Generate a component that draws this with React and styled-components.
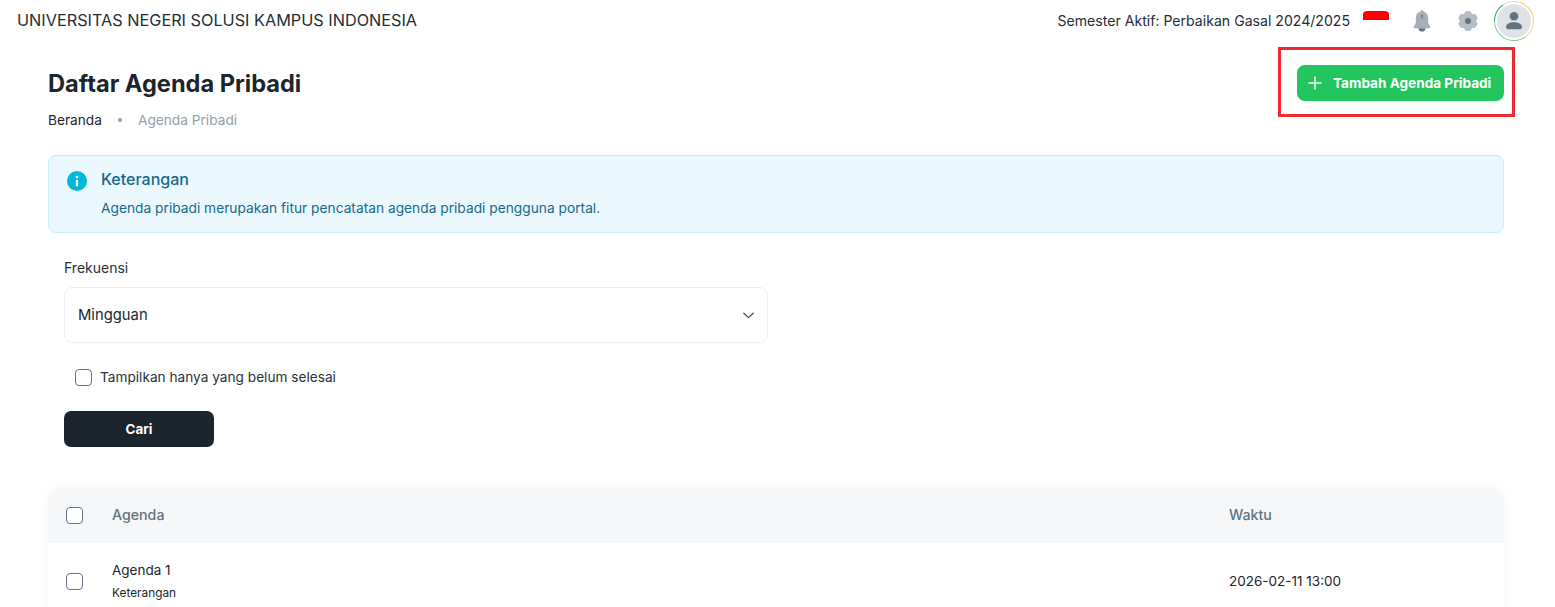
import React from 'react';
import styled, { createGlobalStyle } from 'styled-components';

const GlobalStyle = createGlobalStyle`
  * { box-sizing: border-box; }
  html, body { margin: 0; padding: 0; background: #fff; overflow: hidden; }
  body { font-family: "Inter", "Noto Sans", "Liberation Sans", sans-serif; color: #1c252e; }
`;

const Page = styled.div`
  width: 1555px;
  height: 607px;
  overflow: hidden;
`;

// --- TOPBAR ---

const Topbar = styled.header`
  height: 41px;
  display: flex;
  align-items: center;
  justify-content: space-between;
  padding: 0 21px 0 17px;
`;

const Brand = styled.div`
  margin-bottom: 1px;
  font-size: 16.26px;
  font-weight: 400;
  color: #242d36;
`;

const TopActions = styled.div`
  display: flex;
  align-items: center;
`;

const Semester = styled.span`
  font-size: 14.1px;
  color: #242d36;
  margin-right: 13px;
`;

const Flag = styled.div`
  width: 26px;
  height: 18px;
  margin: 0 21px 2px 0;
  border-radius: 4px 4px 0 0;
  background: linear-gradient(#f00 50%, #fff 50%);
`;

const IconSlot = styled.span`
  width: 24px;
  height: 24px;
  margin-right: ${props => props.$gap}px;
  display: flex;
  align-items: center;
  justify-content: center;
`;

const AvatarRing = styled.div`
  width: 40px;
  height: 40px;
  padding: 1px;
  border-radius: 50%;
  background: conic-gradient(#fbc66b 0 25%, #f5d48f 25% 40%, #7cc89a 40% 75%, #22a06b 75% 90%, #d6dfc8 90%);
  display: flex;
`;

const Avatar = styled.div`
  flex: 1;
  border-radius: 50%;
  background: #dfe3e8;
  border: 2px solid #fff;
  display: flex;
  align-items: center;
  justify-content: center;
`;

// --- PAGE HEADER ---

const Content = styled.main`
  padding: 0 51px 0 48px;
`;

const HeadRow = styled.div`
  display: flex;
  justify-content: space-between;
  align-items: flex-start;
  height: 114px;
  padding-top: 24px;
`;

const Title = styled.h1`
  margin: 0;
  padding-top: 1px;
  font-size: 23.6px;
  line-height: 36px;
  font-weight: 700;
  color: #1c252e;
`;

const Crumbs = styled.div`
  display: flex;
  align-items: center;
  margin-top: 7px;
  font-size: 13.7px;
  line-height: 22px;
`;

const CrumbDot = styled.span`
  width: 4px;
  height: 4px;
  border-radius: 50%;
  background: #919eab;
  margin: 0 16px;
`;

const CrumbMuted = styled.span`
  color: #919eab;
`;

const Highlighted = styled.div`
  position: relative;
  &::after {
    content: '';
    position: absolute;
    top: -18px;
    right: -11px;
    bottom: -16px;
    left: -19px;
    border: 3px solid #ee2a33;
    pointer-events: none;
  }
`;

const AddButton = styled.button`
  display: flex;
  width: 207px;
  height: 36px;
  padding: 0 0 0 11px;
  align-items: center;
  gap: 11px;
  border: none;
  border-radius: 8px;
  background: #22c55e;
  color: #fff;
  font: 700 13.6px "Inter", sans-serif;
  white-space: nowrap;
`;

// --- ALERT ---

const Alert = styled.section`
  height: 78px;
  display: flex;
  gap: 13px;
  padding: 13px 17px;
  background: #ebf8fd;
  border: 1px solid #c9eef6;
  border-radius: 8px;
`;

const AlertIcon = styled.span`
  width: 22px;
  height: 22px;
  margin-top: 1px;
`;

const AlertTitle = styled.div`
  font-size: 16px;
  line-height: 20px;
  font-weight: 500;
  color: #16698f;
`;

const AlertText = styled.div`
  margin-top: 9px;
  font-size: 13.75px;
  line-height: 20px;
  color: #16698f;
`;

// --- FILTER ---

const Filter = styled.section`
  padding: 25px 16px 40px;
`;

const Label = styled.div`
  font-size: 14px;
  line-height: 20px;
  color: #27313b;
`;

const Select = styled.div`
  width: 704px;
  height: 56px;
  margin-top: 9px;
  padding: 0 13px;
  display: flex;
  align-items: center;
  justify-content: space-between;
  border: 1px solid #eceff2;
  border-radius: 8px;
  font-size: 14.8px;
  color: #1c252e;
`;

const CheckRow = styled.label`
  display: flex;
  align-items: center;
  gap: 8px;
  height: 20px;
  margin: 24px 0 0 11px;
  font-size: 13.66px;
  color: #27313b;
`;

const Box = styled.span`
  flex: none;
  width: 17px;
  height: 17px;
  border: 1.5px solid #637381;
  border-radius: 4px;
  background: #fff;
`;

const SearchButton = styled.button`
  display: block;
  width: 150px;
  height: 36px;
  margin-top: 24px;
  border: none;
  border-radius: 7px;
  background: #1c252e;
  color: #fff;
  font: 700 13.4px "Inter", sans-serif;
`;

// --- TABLE ---

const Table = styled.section`
  border-radius: 16px 16px 0 0;
  box-shadow: 0 0 12px rgba(145, 158, 171, 0.1);
`;

const TableRow = styled.div`
  display: grid;
  grid-template-columns: 46px 1117px 1fr;
  align-items: center;
  height: ${props => (props.$head ? 56 : 76)}px;
  padding-left: 18px;
  background: ${props => (props.$head ? '#f4f6f8' : '#fff')};
  border-radius: ${props => (props.$head ? '16px 16px 0 0' : '0')};
`;

const HeadCell = styled.div`
  margin-bottom: 1px;
  font-size: 14.2px;
  font-weight: 500;
  color: #637381;
`;

const CellTitle = styled.div`
  font-size: 13.5px;
  line-height: 20px;
  color: #1c252e;
`;

const CellSub = styled.div`
  margin-top: 4px;
  font-size: 11.85px;
  line-height: 18px;
  color: #1c252e;
`;

const CellTime = styled.div`
  font-size: 13.5px;
  color: #1c252e;
`;

// --- ICONS ---

const BellIcon = () => (
  <svg width="24" height="26" viewBox="0 0 20 24">
    <path fill="#a6afb9" d="M10 2c-.8 0-1.4.6-1.4 1.3C5.800 4 4.300 6.300 4.300 9.200v4.300L2.400 17c-.4.800.1 1.600 1 1.600h13.200c.9 0 1.400-.8 1-1.600l-1.900-3.500V9.200c0-2.900-1.500-5.200-4.300-5.900C11.400 2.600 10.800 2 10 2z" />
    <path fill="#637381" d="M6.600 18.600h6.800c-.3 1.900-1.700 3.200-3.400 3.200s-3.100-1.300-3.400-3.200z" />
    <rect x="9.400" y="6" width="1.200" height="4" rx=".6" fill="#637381" />
  </svg>
);

const GEAR_LOBES = [0, 60, 120, 180, 240, 300];

const GearIcon = () => (
  <svg width="22" height="22" viewBox="0 0 22 22">
    {GEAR_LOBES.map(angle => (
      <circle key={angle} cx="11" cy="4.800" r="3.900" fill="#b4bcc5" transform={`rotate(${angle} 11 11)`} />
    ))}
    <circle cx="11" cy="11" r="6.500" fill="#b4bcc5" />
    <circle cx="11" cy="11" r="3" fill="#637381" />
  </svg>
);

const PersonIcon = () => (
  <svg width="22" height="22" viewBox="0 0 22 22" fill="#637381">
    <circle cx="11" cy="6.300" r="4.300" />
    <path d="M11 12.300c-4.300 0-8 1.900-8 4.600 0 1.500 1 2.300 2.500 2.300h11c1.500 0 2.500-.8 2.500-2.300 0-2.700-3.700-4.600-8-4.600z" />
  </svg>
);

const PlusIcon = () => (
  <svg width="14" height="14" viewBox="0 0 14 14" stroke="#fff" strokeWidth="1.500" strokeLinecap="round">
    <path d="M7 1v12M1 7h12" />
  </svg>
);

const InfoIcon = () => (
  <svg width="22" height="22" viewBox="0 0 22 22">
    <circle cx="11" cy="11" r="10" fill="#00b8d9" />
    <circle cx="11" cy="7" r="1.300" fill="#fff" />
    <rect x="9.900" y="9.700" width="2.200" height="6.800" rx="1" fill="#fff" />
  </svg>
);

const ChevronIcon = () => (
  <svg width="11" height="7" viewBox="0 0 11 7" fill="none" stroke="#454f5b" strokeWidth="1.300" strokeLinecap="round" strokeLinejoin="round">
    <path d="M.8 1.200 5.500 5.600l4.700-4.400" />
  </svg>
);

const App = () => (
  <Page>
    <GlobalStyle />
    <Topbar>
      <Brand>UNIVERSITAS NEGERI SOLUSI KAMPUS INDONESIA</Brand>
      <TopActions>
        <Semester>Semester Aktif: Perbaikan Gasal 2024/2025</Semester>
        <Flag />
        <IconSlot $gap={22}><BellIcon /></IconSlot>
        <IconSlot $gap={14}><GearIcon /></IconSlot>
        <AvatarRing>
          <Avatar><PersonIcon /></Avatar>
        </AvatarRing>
      </TopActions>
    </Topbar>

    <Content>
      <HeadRow>
        <div>
          <Title>Daftar Agenda Pribadi</Title>
          <Crumbs>
            <span>Beranda</span>
            <CrumbDot />
            <CrumbMuted>Agenda Pribadi</CrumbMuted>
          </Crumbs>
        </div>
        <Highlighted>
          <AddButton><PlusIcon /> Tambah Agenda Pribadi</AddButton>
        </Highlighted>
      </HeadRow>

      <Alert>
        <AlertIcon><InfoIcon /></AlertIcon>
        <div>
          <AlertTitle>Keterangan</AlertTitle>
          <AlertText>Agenda pribadi merupakan fitur pencatatan agenda pribadi pengguna portal.</AlertText>
        </div>
      </Alert>

      <Filter>
        <Label>Frekuensi</Label>
        <Select>
          <span>Mingguan</span>
          <ChevronIcon />
        </Select>
        <CheckRow>
          <Box />
          Tampilkan hanya yang belum selesai
        </CheckRow>
        <SearchButton>Cari</SearchButton>
      </Filter>

      <Table>
        <TableRow $head>
          <Box />
          <HeadCell>Agenda</HeadCell>
          <HeadCell>Waktu</HeadCell>
        </TableRow>
        <TableRow>
          <Box />
          <div>
            <CellTitle>Agenda 1</CellTitle>
            <CellSub>Keterangan</CellSub>
          </div>
          <CellTime>2026-02-11 13:00</CellTime>
        </TableRow>
      </Table>
    </Content>
  </Page>
);

export default App;
